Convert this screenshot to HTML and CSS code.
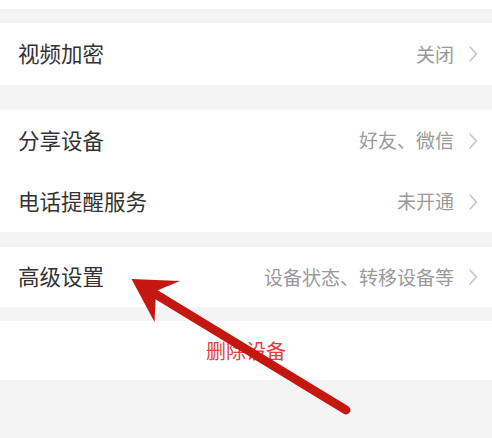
FILE: index.html
```html
<!DOCTYPE html>
<html lang="zh-CN">
<head>
<meta charset="utf-8">
<title>设备设置</title>
<link rel="stylesheet" href="styles.css">
</head>
<body>
<div class="page">
  <div class="top-strip"></div>

  <div class="group g1">
    <div class="row h62">
      <span class="label">视频加密</span>
      <span class="value">关闭</span>
      <svg class="chev" viewBox="0 0 9 16" width="9" height="16"><polyline points="1.2,1.2 7.4,8 1.2,14.8"/></svg>
    </div>
  </div>

  <div class="group g2">
    <div class="row h61">
      <span class="label">分享设备</span>
      <span class="value">好友、微信</span>
      <svg class="chev" viewBox="0 0 9 16" width="9" height="16"><polyline points="1.2,1.2 7.4,8 1.2,14.8"/></svg>
    </div>
    <div class="row h61">
      <span class="label">电话提醒服务</span>
      <span class="value">未开通</span>
      <svg class="chev" viewBox="0 0 9 16" width="9" height="16"><polyline points="1.2,1.2 7.4,8 1.2,14.8"/></svg>
    </div>
  </div>

  <div class="group g3">
    <div class="row h60">
      <span class="label">高级设置</span>
      <span class="value">设备状态、转移设备等</span>
      <svg class="chev" viewBox="0 0 9 16" width="9" height="16"><polyline points="1.2,1.2 7.4,8 1.2,14.8"/></svg>
    </div>
  </div>

  <div class="group g4">
    <div class="delete">删除设备</div>
  </div>

  <svg class="arrow" viewBox="0 0 492 438" width="492" height="438">
    <line x1="152" y1="292" x2="346" y2="410" />
    <polygon points="131.5,279 180,281 156,291 154.5,322" />
  </svg>
</div>
</body>
</html>
```

FILE: styles.css
```css
html, body {
  margin: 0;
  padding: 0;
}
body {
  background: #f4f4f4;
  font-family: "Noto Sans CJK SC", "Noto Sans", sans-serif;
}
.page {
  position: relative;
  width: 492px;
  height: 438px;
  overflow: hidden;
}
.top-strip {
  height: 9px;
  background: #fff;
}
.group {
  background: #fff;
}
.g1 { margin-top: 14px; }
.g2 { margin-top: 25px; }
.g3 { margin-top: 15px; }
.g4 { margin-top: 14px; }

.row {
  display: flex;
  align-items: center;
  padding: 0 14px 0 18px;
}
.h62 { height: 62px; }
.h61 { height: 61px; }
.h60 { height: 60px; }

.label {
  flex: 1;
  font-size: 21.5px;
  color: #333;
  line-height: 1;
  margin-top: -2px;
}
.value {
  font-size: 19px;
  color: #9a9a9a;
  line-height: 1;
  margin-right: 15px;
  margin-top: -2px;
}
.chev {
  display: block;
}
.chev polyline {
  fill: none;
  stroke: #c6c6c6;
  stroke-width: 1.6;
  stroke-linecap: round;
  stroke-linejoin: round;
}
.delete {
  height: 59px;
  display: flex;
  align-items: center;
  justify-content: center;
  font-size: 20px;
  color: #e2403a;
  line-height: 1;
}
.arrow {
  position: absolute;
  left: 0;
  top: 0;
}
.arrow line {
  stroke: #c4170f;
  stroke-width: 9;
  stroke-linecap: round;
}
.arrow polygon {
  fill: #c4170f;
}
```
